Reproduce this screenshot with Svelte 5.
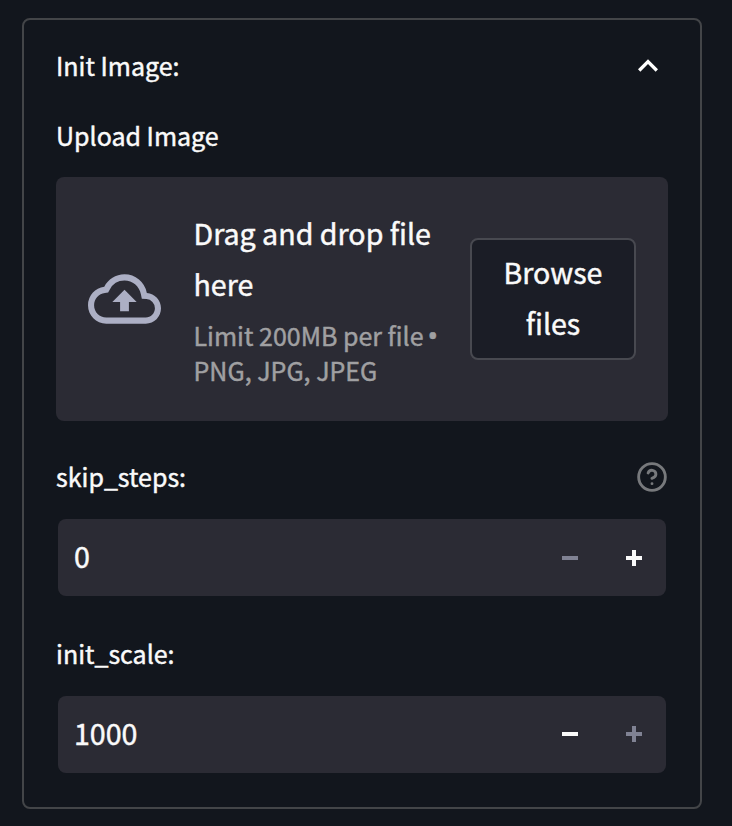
<script>
  const fields = [
    { label: 'skip_steps:', value: '0', help: true, canDecrease: false, canIncrease: true },
    { label: 'init_scale:', value: '1000', help: false, canDecrease: true, canIncrease: false }
  ];
</script>

<main>
  <section class="expander">
    <header>
      <span class="label">Init Image:</span>
      <svg width="40" height="40" viewBox="0 0 24 24" fill="#fff"><path d="M12 8l-6 6 1.41 1.41L12 10.83l4.59 4.58L18 14z" /></svg>
    </header>

    <div class="label upload-label">Upload Image</div>
    <div class="dropzone">
      <svg class="cloud" width="73" height="74" viewBox="0 0 24 24" preserveAspectRatio="none" fill="#acafc4"><path d="M19.35 10.04A7.49 7.49 0 0012 4C9.11 4 6.6 5.64 5.35 8.04A5.994 5.994 0 000 14c0 3.31 2.69 6 6 6h13c2.76 0 5-2.24 5-5 0-2.64-2.05-4.78-4.65-4.96zM19 18H6c-2.21 0-4-1.79-4-4 0-2.05 1.53-3.76 3.56-3.97l1.07-.11.5-.95A5.469 5.469 0 0112 6c2.62 0 4.88 1.86 5.39 4.43l.3 1.5 1.53.11A2.98 2.98 0 0122 15c0 1.65-1.35 3-3 3zM8 13h2.55v3h2.9v-3H16l-4-4z" /></svg>
      <div class="hint">
        <div class="big">Drag and drop file<br />here</div>
        <div class="small">Limit 200MB per file<span class="bullet">•</span><br />PNG, JPG, JPEG</div>
      </div>
      <button class="browse">Browse<br />files</button>
    </div>

    {#each fields as field}
      <div class="field">
        <div class="field-head">
          <span class="label">{field.label}</span>
          {#if field.help}
            <svg width="32" height="32" viewBox="0 0 24 24" fill="none" stroke="#77797c" stroke-width="2.15" stroke-linecap="round" stroke-linejoin="round"><circle cx="12" cy="12" r="10" /><path d="M9.09 9a3 3 0 0 1 5.83 1c0 2-3 3-3 3M12 17h.01" /></svg>
          {/if}
        </div>
        <div class="number">
          <span class="value">{field.value}</span>
          <button class="step" class:disabled={!field.canDecrease} aria-label="Decrease">
            <svg width="16" height="16" viewBox="0 0 8 8" fill="currentColor" shape-rendering="crispEdges"><path d="M0 3h8v2H0z" /></svg>
          </button>
          <button class="step" class:disabled={!field.canIncrease} aria-label="Increase">
            <svg width="16" height="16" viewBox="0 0 8 8" fill="currentColor" shape-rendering="crispEdges"><path d="M3 0v3H0v2h3v3h2V5h3V3H5V0z" /></svg>
          </button>
        </div>
      </div>
    {/each}
  </section>
</main>

<style>
  :global(body) { background: #12161d; }
  main {
    box-sizing: border-box;
    height: 826px;
    padding: 18px 30px 17px 22px;
    background: #12161d;
    color: #fafafa;
    font-family: "Noto Sans CJK SC", "Noto Sans", sans-serif;
    -webkit-text-stroke: 0.45px currentColor;
  }
  svg { display: block; flex: none; }
  button { font: inherit; color: inherit; border: 0; padding: 0; background: none; }
  .expander {
    box-sizing: border-box;
    height: 791px;
    padding: 0 32px;
    border: 2px solid #434548;
    border-radius: 8px;
  }
  header {
    display: flex;
    align-items: center;
    justify-content: space-between;
    height: 92px;
  }
  .label { font-size: 25px; line-height: 40px; white-space: nowrap; }
  header .label, .field-head .label { padding-bottom: 2px; }
  .upload-label { margin-top: 3px; height: 62px; }
  .dropzone {
    box-sizing: border-box;
    display: flex;
    align-items: center;
    height: 244px;
    padding: 0 32px;
    border-radius: 8px;
    background: #2b2b34;
  }
  .hint { flex: 1; margin-left: 32.5px; padding-bottom: 3px; white-space: nowrap; }
  .big { font-size: 28.6px; line-height: 51px; }
  .small { margin-top: 9px; font-size: 25px; line-height: 35px; color: #a0a0a2; }
  .bullet { margin-left: 4px; font-family: "Noto Sans", sans-serif; font-size: 28px; line-height: 1; }
  .browse {
    box-sizing: border-box;
    width: 166px;
    height: 122px;
    padding-bottom: 4px;
    border: 2px solid #484950;
    border-radius: 8px;
    background: #1b1d26;
    font-size: 28.6px;
    line-height: 51px;
  }
  .field { padding-top: 36px; height: 141px; }
  .field-head {
    display: flex;
    align-items: center;
    justify-content: space-between;
    height: 40px;
  }
  .number {
    display: flex;
    align-items: center;
    height: 77px;
    margin: 22px 2px 0;
    border-radius: 8px;
    background: #2b2b34;
  }
  .value { flex: 1; padding: 0 0 5px 16px; font-size: 28.6px; line-height: 51px; }
  .step { display: flex; align-items: center; justify-content: center; width: 64px; height: 77px; }
  .field:last-child .step { height: 76px; margin-bottom: 1px; }
  .step.disabled { color: #808293; }
</style>
